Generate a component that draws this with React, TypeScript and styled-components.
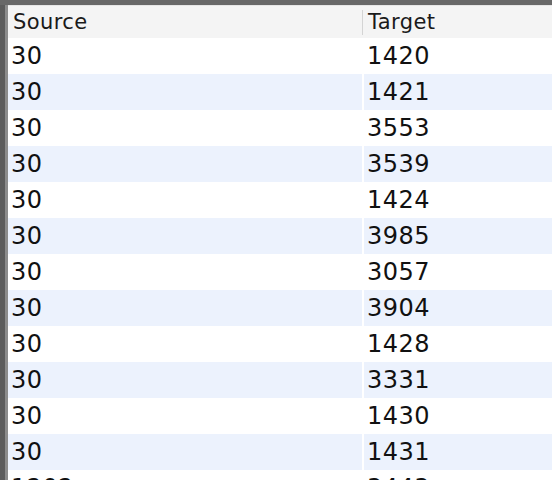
import React from "react";
import styled, { createGlobalStyle } from "styled-components";

const Global = createGlobalStyle`
  html, body { margin: 0; padding: 0; background: #ffffff; }
  body { width: 552px; height: 480px; overflow: hidden; }
`;

const Frame = styled.div`
  width: 552px;
  height: 480px;
  overflow: hidden;
  display: flex;
  flex-direction: column;
  background: #686868;
`;

const Body = styled.div`
  margin-top: 5px;
  flex: 1;
  display: flex;
  border-left: 5px solid #5c5c5c;
  min-height: 0;
`;

const Inner = styled.div`
  flex: 1;
  display: flex;
  flex-direction: column;
  border-left: 3px solid #8c8c8c;
  background: #ffffff;
  min-height: 0;
  overflow: hidden;
`;

const HeaderRow = styled.div`
  display: grid;
  grid-template-columns: 354px 1fr;
  height: 32px;
  flex: none;
  background: #f4f4f4;
  border-top: 1px solid #e6e6e6;
`;

const HeaderCell = styled.div<{ $divider?: boolean }>`
  display: flex;
  align-items: center;
  padding-left: ${(p) => (p.$divider ? "6px" : "5px")};
  font-family: "DejaVu Sans", sans-serif;
  font-size: 21px;
  letter-spacing: 0.4px;
  color: #1a1a1a;
  position: relative;
  &::before {
    content: "";
    display: ${(p) => (p.$divider ? "block" : "none")};
    position: absolute;
    left: 0;
    top: 4px;
    bottom: 3px;
    width: 1px;
    background: #d4d4d4;
  }
`;

const Row = styled.div`
  display: grid;
  grid-template-columns: 354px 1fr;
  column-gap: 2px;
  height: 36px;
  flex: none;
  background: #ffffff;
`;

const Cell = styled.div<{ $alt: boolean; $pad: number }>`
  display: flex;
  align-items: center;
  padding-left: ${(p) => p.$pad}px;
  background: ${(p) => (p.$alt ? "#ecf2fd" : "#ffffff")};
  font-family: "DejaVu Sans", sans-serif;
  font-size: 24px;
  letter-spacing: 0.5px;
  color: #111111;
`;

const rows: [string, string][] = [
  ["30", "1420"],
  ["30", "1421"],
  ["30", "3553"],
  ["30", "3539"],
  ["30", "1424"],
  ["30", "3985"],
  ["30", "3057"],
  ["30", "3904"],
  ["30", "1428"],
  ["30", "3331"],
  ["30", "1430"],
  ["30", "1431"],
  ["1202", "3443"],
];

export default function App() {
  return (
    <>
      <Global />
      <Frame>
        <Body>
          <Inner>
            <HeaderRow>
              <HeaderCell>Source</HeaderCell>
              <HeaderCell $divider>Target</HeaderCell>
            </HeaderRow>
            {rows.map(([s, t], i) => (
              <Row key={i}>
                <Cell $alt={i % 2 === 1} $pad={3}>{s}</Cell>
                <Cell $alt={i % 2 === 1} $pad={3}>{t}</Cell>
              </Row>
            ))}
          </Inner>
        </Body>
      </Frame>
    </>
  );
}
